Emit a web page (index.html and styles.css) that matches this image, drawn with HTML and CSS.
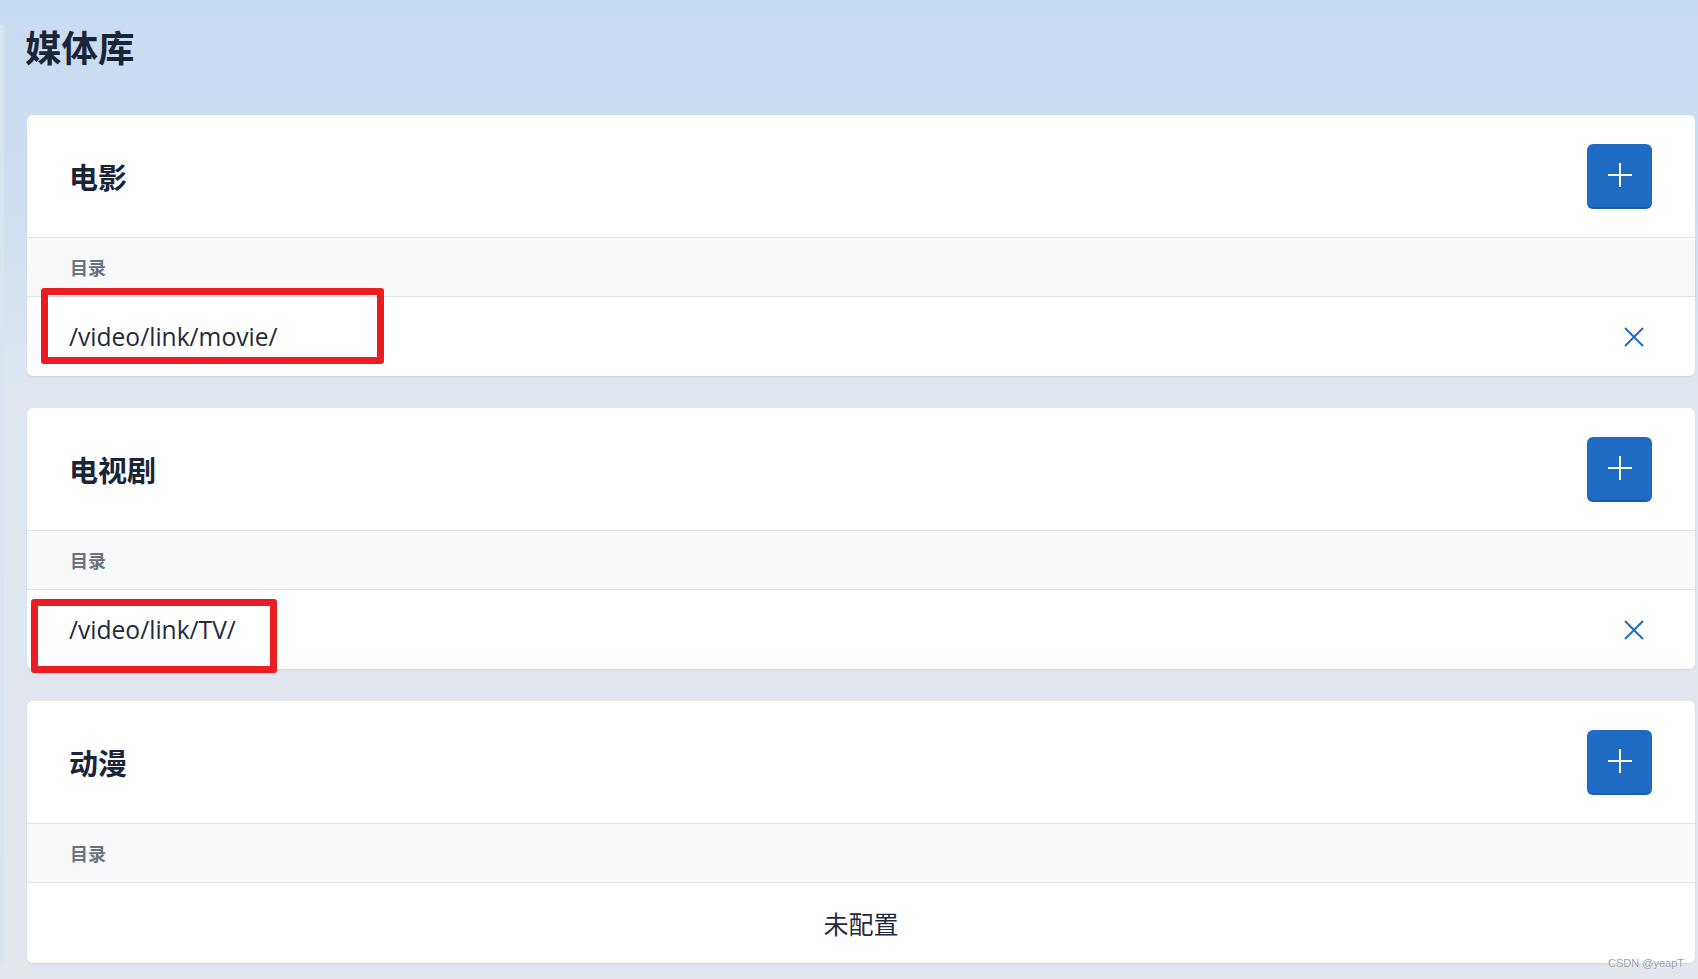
FILE: index.html
```html
<!DOCTYPE html>
<html>
<head>
    <meta charset='utf-8'>
    <title>媒体库</title>
    <meta name='viewport' content='width=device-width, initial-scale=1'>
    <link rel="stylesheet" href="styles.css">
</head>
<body>
    <div class="page">
        <h1 class="page-title">媒体库</h1>

        <section class="card">
            <header class="card-head">
                <h2>电影</h2>
                <button class="btn-add" type="button">
                    <svg width="24" height="24" viewBox="0 0 24 24"><path d="M12 0v24M0 12h24" stroke="#fff" stroke-width="2"/></svg>
                </button>
            </header>
            <div class="card-label">目录</div>
            <div class="card-row">
                <span class="path">/video/link/movie/</span>
                <button class="btn-del" type="button">
                    <svg width="20" height="20" viewBox="0 0 20 20"><path d="M1 1l18 18M19 1L1 19" stroke="#1f6bc4" stroke-width="2"/></svg>
                </button>
                <div class="mark mark-1"></div>
            </div>
        </section>

        <section class="card">
            <header class="card-head">
                <h2>电视剧</h2>
                <button class="btn-add" type="button">
                    <svg width="24" height="24" viewBox="0 0 24 24"><path d="M12 0v24M0 12h24" stroke="#fff" stroke-width="2"/></svg>
                </button>
            </header>
            <div class="card-label">目录</div>
            <div class="card-row">
                <span class="path">/video/link/TV/</span>
                <button class="btn-del" type="button">
                    <svg width="20" height="20" viewBox="0 0 20 20"><path d="M1 1l18 18M19 1L1 19" stroke="#1f6bc4" stroke-width="2"/></svg>
                </button>
                <div class="mark mark-2"></div>
            </div>
        </section>

        <section class="card">
            <header class="card-head">
                <h2>动漫</h2>
                <button class="btn-add" type="button">
                    <svg width="24" height="24" viewBox="0 0 24 24"><path d="M12 0v24M0 12h24" stroke="#fff" stroke-width="2"/></svg>
                </button>
            </header>
            <div class="card-label">目录</div>
            <div class="card-row card-empty">未配置</div>
        </section>
    </div>
    <div class="watermark">CSDN @yeapT</div>
</body>
</html>
```

FILE: styles.css
```css
html, body {
    margin: 0;
    padding: 0;
}
body {
    min-height: 979px;
    background: linear-gradient(180deg, #c8dcf1 0, #cfdeef 200px, #dfe6ef 400px, #e3e7ed 100%);
    font-family: "Noto Sans CJK SC", sans-serif;
    color: #1b2538;
    overflow: hidden;
}
.page {
    margin-left: 4px;
    padding: 0 3px 0 23px;
    box-shadow: -4px 0 0 #d9e4f0;
}
.page-title {
    margin: 25px 0 46px -2px;
    font-size: 36.5px;
    line-height: 44px;
    font-weight: 700;
}
.card {
    background: #fff;
    border-radius: 6px;
    box-shadow: 0 1px 2px rgba(15, 23, 42, 0.08);
    margin-bottom: 32px;
}
.card-head {
    height: 122px;
    padding: 0 43px 0 42px;
    display: flex;
    align-items: center;
    justify-content: space-between;
}
.card-head h2 {
    margin: 0;
    font-size: 29px;
    font-weight: 700;
}
.btn-add {
    width: 65px;
    height: 65px;
    border: 0;
    border-bottom: 2px solid #1a5cad;
    border-radius: 6px;
    background: #1f6bc4;
    display: flex;
    align-items: center;
    justify-content: center;
    padding: 0;
}
.card-label {
    height: 58px;
    border-top: 1px solid #e1e3e7;
    background: #f8f9fb;
    padding-left: 43px;
    display: flex;
    align-items: center;
    font-size: 18px;
    font-weight: 700;
    color: #6b7280;
}
.card-row {
    position: relative;
    height: 79px;
    border-top: 1px solid #e1e3e7;
    padding: 0 51px 0 42px;
    display: flex;
    align-items: center;
    justify-content: space-between;
}
.path {
    font-family: "Open Sans", sans-serif;
    font-size: 24.6px;
    color: #1f2a3c;
}
.btn-del {
    border: 0;
    background: none;
    padding: 0;
    width: 20px;
    height: 20px;
    display: flex;
}
.card-empty {
    height: 80px;
    justify-content: center;
    padding: 0;
    font-size: 25px;
    color: #1f2a3c;
}
.mark {
    position: absolute;
    border: 7px solid #ec1c24;
    border-radius: 3px;
    box-sizing: border-box;
}
.mark-1 {
    left: 14px;
    top: -9px;
    width: 343px;
    height: 76px;
}
.mark-2 {
    left: 4px;
    top: 9px;
    width: 246px;
    height: 74px;
}
.watermark {
    position: absolute;
    right: 14px;
    top: 957px;
    font-family: "Liberation Sans", sans-serif;
    font-size: 11px;
    color: #9aa0a8;
    text-shadow: 0 0 2px #fff;
}
```
